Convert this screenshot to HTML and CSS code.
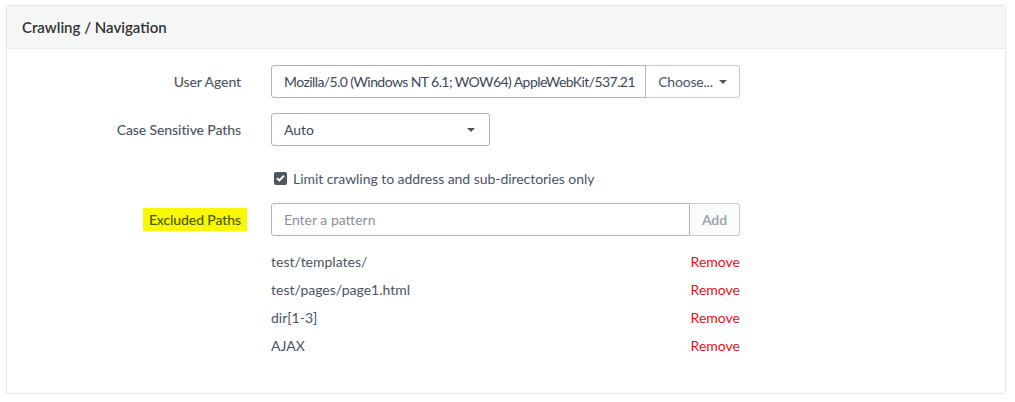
FILE: index.html
```html
<!DOCTYPE html>
<html>
<head>
<meta charset="utf-8">
<link rel="stylesheet" href="styles.css">
</head>
<body>
<div class="panel">
  <div class="panel-head">Crawling / Navigation</div>
  <div class="panel-body">
    <div class="row r1">
      <div class="label">User Agent</div>
      <div class="ctrl">
        <div class="input-group ua">
          <div class="input ua-text">Mozilla/5.0 (Windows NT 6.1; WOW64) AppleWebKit/537.21</div>
          <div class="btn choose">Choose... <span class="caret"></span></div>
        </div>
      </div>
    </div>
    <div class="row r2">
      <div class="label">Case Sensitive Paths</div>
      <div class="ctrl">
        <div class="input select">Auto <span class="caret"></span></div>
      </div>
    </div>
    <div class="row r3">
      <div class="label"></div>
      <div class="ctrl check">
        <span class="box"><svg width="9" height="8" viewBox="0 0 9 8"><path d="M1 4.2 L3.4 6.4 L8 1.6" fill="none" stroke="#fff" stroke-width="2"/></svg></span>
        <span class="check-text">Limit crawling to address and sub-directories only</span>
      </div>
    </div>
    <div class="row r4">
      <div class="label"><span class="hl">Excluded Paths</span></div>
      <div class="ctrl">
        <div class="input-group ex">
          <div class="input placeholder">Enter a pattern</div>
          <div class="btn add">Add</div>
        </div>
      </div>
    </div>
    <div class="list">
      <div class="item"><span>test/templates/</span><a class="remove">Remove</a></div>
      <div class="item"><span>test/pages/page1.html</span><a class="remove">Remove</a></div>
      <div class="item"><span>dir[1-3]</span><a class="remove">Remove</a></div>
      <div class="item"><span>AJAX</span><a class="remove">Remove</a></div>
    </div>
  </div>
</div>
</body>
</html>
```

FILE: styles.css
```css
* { box-sizing: border-box; }
body {
  margin: 0;
  background: #fff;
  font-family: "Lato", "Open Sans", sans-serif;
  font-size: 14px;
  color: #4a5563;
}
.panel {
  margin: 5px 9px 0 6px;
  border: 1px solid #e2e6e6;
  border-radius: 3px;
  height: 389px;
  box-shadow: 0 1px 1px rgba(0,0,0,0.05);
}
.panel-head {
  height: 43px;
  background: #f5f7f7;
  border-bottom: 1px solid #e6eaea;
  padding: 0 15px;
  display: flex;
  align-items: center;
  font-size: 15px;
  font-weight: 600;
  color: #333;
}
.panel-body {
  padding-top: 16px;
}
.row {
  display: flex;
  align-items: center;
}
.label {
  width: 234px;
  text-align: right;
  margin-right: 30px;
  color: #4e5660;
  font-weight: 500;
  letter-spacing: -0.1px;
}
.ctrl { display: flex; align-items: center; }
.r1, .r2, .r4 { height: 33px; }
.r1 { margin-bottom: 15px; }
.r2 { margin-bottom: 22px; }
.r3 { height: 20px; margin-bottom: 15px; }
.input-group { display: flex; height: 33px; }
.input {
  height: 33px;
  border: 1px solid #b8b0b2;
  border-radius: 3px;
  padding: 0 12px;
  display: flex;
  align-items: center;
  color: #3e4957;
  white-space: nowrap;
}
.ua { width: 469px; }
.ua .input { width: 375px; border-radius: 3px 0 0 3px; overflow: hidden; letter-spacing: -0.58px; }
.btn {
  height: 33px;
  border: 1px solid #c8c8c8;
  border-left: none;
  border-radius: 0 3px 3px 0;
  display: flex;
  align-items: center;
  justify-content: center;
  background: #fff;
}
.choose { width: 94px; color: #4a5563; letter-spacing: -0.2px; }
.caret {
  display: inline-block;
  width: 0; height: 0;
  border-left: 4px solid transparent;
  border-right: 4px solid transparent;
  border-top: 4px solid #555;
  margin-left: 6px;
}
.select { width: 219px; justify-content: space-between; }
.select .caret { margin-right: 2px; }
.check { padding-left: 3px; }
.box {
  width: 13px; height: 13px;
  background: #4e5660;
  border-radius: 2px;
  display: inline-flex;
  align-items: center;
  justify-content: center;
  margin-right: 6px;
}
.check-text { color: #4a5563; letter-spacing: -0.05px; }
.ex { width: 469px; }
.ex .input { width: 419px; border-radius: 3px 0 0 3px; }
.placeholder { color: #8a9099; }
.add { width: 50px; background: #fafbfb; color: #9aa1a8; font-weight: 600; }
.hl { background: #f8f800; padding: 3px 6px 3px 6px; margin-right: -6px; color: #4e5600; }
.list {
  margin-left: 264px;
  width: 469px;
  margin-top: 11px;
}
.item {
  height: 28px;
  display: flex;
  align-items: center;
  justify-content: space-between;
  color: #4a5563;
}
.remove { color: #e8101c; }
```
